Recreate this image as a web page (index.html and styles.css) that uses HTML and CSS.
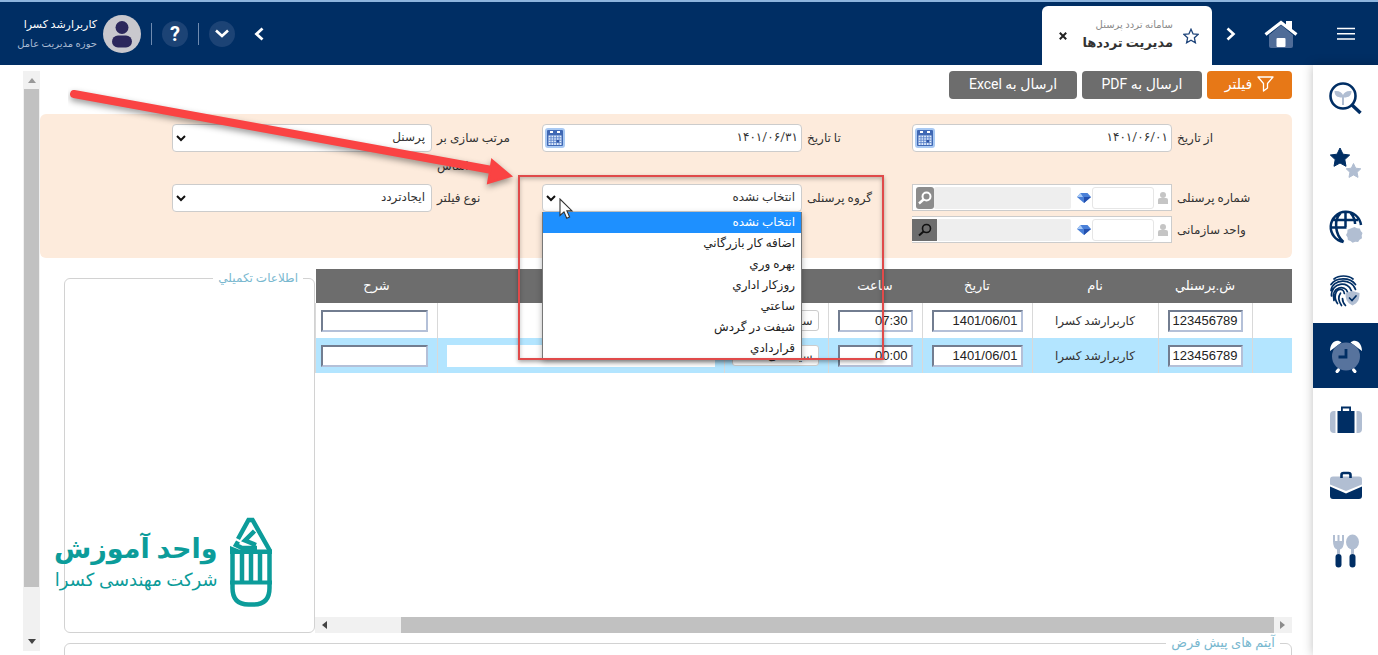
FILE: index.html
```html
<!DOCTYPE html>
<html lang="fa" dir="rtl">
<head>
<meta charset="utf-8">
<title>مدیریت ترددها</title>
<link rel="stylesheet" href="styles.css">
</head>
<body>
<header class="topbar">
  <button class="menu-btn" aria-label="منو"><svg width="18" height="14" viewBox="0 0 18 14"><path d="M0 1.5h18M0 6.8h18M0 12.1h18" stroke="#fff" stroke-width="1.5"/></svg></button>
  <a class="home" href="#" aria-label="خانه"><svg width="34" height="28" viewBox="0 0 34 28"><path d="M5 15 17 5l12 10v11a2 2 0 0 1-2 2H7a2 2 0 0 1-2-2z" fill="#4f6c98"/><path d="M22 1h6v10l-6-5z" fill="#fff"/><path d="M1.500 14.500 17 2.500l15.500 12" fill="none" stroke="#fff" stroke-width="3.200"/><rect x="12.500" y="18" width="9" height="9" rx="1" fill="#fff"/></svg></a>
  <button class="plain" aria-label="بعدی"><svg width="10" height="14" viewBox="0 0 10 14"><path d="m1.500 1.500 6 5.500-6 5.500" fill="none" stroke="#fff" stroke-width="2.600"/></svg></button>
  <div class="tab">
    <svg width="16" height="16" viewBox="0 0 16 16"><path d="m8 1.200 2.100 4.700 5 .5-3.700 3.400 1 5L8 12.200l-4.400 2.600 1-5L.9 6.400l5-.5z" fill="none" stroke="#1d4379" stroke-width="1.300"/></svg>
    <div class="tab-text"><span class="tab-sub">سامانه تردد پرسنل</span><strong>مدیریت ترددها</strong></div>
    <button class="close" aria-label="بستن"><svg width="8" height="8" viewBox="0 0 8 8"><path d="m.8.8 6.400 6.400M7.200.8.8 7.200" stroke="#222" stroke-width="2"/></svg></button>
  </div>
  <div class="spacer"></div>
  <button class="plain" aria-label="قبلی"><svg width="10" height="14" viewBox="0 0 10 14"><path d="m8.500 1.500-6 5.500 6 5.500" fill="none" stroke="#fff" stroke-width="2.800"/></svg></button>
  <button class="round first" aria-label="باز کردن"><svg width="14" height="9" viewBox="0 0 14 9"><path d="m1 1.500 6 5.500 6-5.500" fill="none" stroke="#fff" stroke-width="2.600"/></svg></button>
  <span class="divider"></span>
  <button class="round">?</button>
  <span class="divider"></span>
  <svg class="avatar" width="38" height="38" viewBox="0 0 38 38"><circle cx="19" cy="19" r="19" fill="#c9c8ce"/><circle cx="19" cy="12.500" r="6.500" fill="#2c275c"/><rect x="9" y="20.500" width="20" height="12" rx="6" fill="#2c275c"/></svg>
  <div class="user"><span>کاربرارشد کسرا</span><small>حوزه مدیریت عامل</small></div>
</header>

<div class="shell">
  <nav class="side">
    <a href="#" aria-label="جستجو"><svg width="34" height="34" viewBox="0 0 34 34"><path d="M13 23V15.500c-5 0-7.500-2-7.500-6.500 5-.5 7.500 1.500 8.500 4 1-2.500 3.500-4.500 8.500-4 0 4.500-2.500 6.500-7.500 6.500V23z" fill="#b1bed2"/><circle cx="14" cy="14" r="12.500" fill="none" stroke="#002e64" stroke-width="2.600"/><path d="m22.500 22.500 9 8.500" stroke="#002e64" stroke-width="3.400"/></svg></a>
    <a href="#" aria-label="علاقه‌مندی‌ها"><svg width="34" height="34" viewBox="0 0 34 34"><path d="m11 2 3 6.200 6.700.8-4.900 4.600 1.200 6.700-6-3.300-6 3.300 1.200-6.700L1.300 9l6.700-.8z" fill="#002e64" stroke="#002e64" stroke-linejoin="round"/><path d="m24.500 17.500 2.200 4.700 5.100.6-3.700 3.500.9 5.100-4.500-2.500-4.500 2.500.9-5.100-3.700-3.500 5.100-.6z" fill="#b1bed2" stroke="#b1bed2" stroke-linejoin="round"/></svg></a>
    <a href="#" aria-label="وب"><svg width="34" height="34" viewBox="0 0 34 34" fill="none" stroke="#002e64" stroke-width="2.500"><path d="M14.500 32A15.200 15.200 0 1 1 32 15M16.500 2v15M11.500 3C4.500 10 6 25 14.500 32M21.500 3c3 3.200 4.400 7.200 4.600 11M4 10h25M1.500 17.500h16"/><path d="m25.500 17 2.500 1.200 2.800.3 1 2.500 1.700 2-.8 2.500.3 2.800-2.400 1.400-1.500 2.300-2.800-.2-2.700.9-2.100-1.800-2.600-1-.4-2.700-1.500-2.300 1.300-2.400.2-2.700 2.500-1z" fill="#b1bed2" stroke="none"/></svg></a>
    <a href="#" aria-label="اثر انگشت"><svg width="34" height="34" viewBox="0 0 34 34" fill="none" stroke="#002e64" stroke-width="1.700" stroke-linecap="round"><path d="M5 5C10 1 19 1 24 5M2 10.500C7 3 21 3 26.500 10.500M2 16.500C3.500 4.500 23 4 26.500 15.500M2.500 22C2 7.500 20 7 22.500 17M5 26.500C2 11.500 16.500 11 18.500 18M8.500 29.500C4.500 24 6 15.500 11.500 15.500c2.500 0 3.500 1.500 3.800 4M12.500 31.500c-3-4.500-3.500-9-1-12.300M16.500 31.500c-2-2-3-4-3-7"/><path d="m23.500 17 7 2c0 6-1 9.500-7 12.500-6-3-7-6.500-7-12.500z" fill="#b1bed2" stroke="none"/><path d="m20.500 24 2.500 2.500 4-4.500"/></svg></a>
    <a class="active" href="#" aria-label="تردد"><svg width="34" height="34" viewBox="0 0 34 34"><path d="M1 12C1 3 8-1 12.500 3.500zM33 12c0-9-7-13-11.500-8.500z" fill="#fff"/><circle cx="17" cy="17.500" r="14" fill="#57739d"/><path d="M17 10v8h-7.500" fill="none" stroke="#002e64" stroke-width="2.800"/><path d="m9.300 31-1.200 1.500M24.700 31l1.200 1.500" stroke="#fff" stroke-width="3.200" stroke-linecap="round"/></svg></a>
    <a href="#" aria-label="ماموریت"><svg width="34" height="34" viewBox="0 0 34 34"><path d="M5 7h1.500v22H5a4 4 0 0 1-4-4V11a4 4 0 0 1 4-4zM27.500 7H29a4 4 0 0 1 4 4v14a4 4 0 0 1-4 4h-1.500z" fill="#b1bed2"/><path d="M8.500 7H12V2.500h10V7h3.500v22h-17zM13.800 7h6.400V4.500h-6.400z" fill="#002e64" fill-rule="evenodd"/></svg></a>
    <a href="#" aria-label="کیف"><svg width="34" height="34" viewBox="0 0 34 34"><path d="M4 7.500h26a3 3 0 0 1 3 3v5L17 22 1 15.500v-5a3 3 0 0 1 3-3z" fill="#b1bed2"/><path d="m1 17.500 16 7 16-7V27a3 3 0 0 1-3 3H4a3 3 0 0 1-3-3z" fill="#002e64"/><path d="M12.500 9V6q0-2 2-2h5q2 0 2 2v3" fill="none" stroke="#002e64" stroke-width="2.600"/></svg></a>
    <a href="#" aria-label="غذا"><svg width="34" height="34" viewBox="0 0 34 34"><path d="M5 1v7M9.500 1v8M14 1v7" stroke="#b1bed2" stroke-width="2"/><path d="M4 7h11q0 7-4 8.500V20H8v-4.500Q4 14 4 7z" fill="#b1bed2"/><ellipse cx="23.500" cy="8" rx="6.500" ry="7.500" fill="#b1bed2"/><path d="M22 14h3v6h-3z" fill="#b1bed2"/><rect x="6.500" y="20" width="6" height="13.500" rx="3" fill="#002e64"/><rect x="20.500" y="20" width="6" height="13.500" rx="3" fill="#002e64"/></svg></a>
  </nav>

  <main class="main">
    <div class="content">
      <div class="toolbar">
        <button class="btn orange"><svg width="17" height="16" viewBox="0 0 17 16"><path d="M1 1h15l-5.500 6.500V12L6.500 15V7.500z" fill="none" stroke="#fff" stroke-width="1.300" stroke-linejoin="round"/></svg>فیلتر</button>
        <button class="btn pdf">ارسال به PDF</button>
        <button class="btn excel">ارسال به Excel</button>
      </div>

      <form class="filters">
        <div class="field"><label for="from">از تاریخ</label>
          <div class="box"><input id="from" type="text" value="۱۴۰۱/۰۶/۰۱"><svg class="cal" width="20" height="20" viewBox="0 0 20 20"><use href="#calendar"/></svg></div></div>
        <div class="field"><label for="to">تا تاریخ</label>
          <div class="box"><input id="to" type="text" value="۱۴۰۱/۰۶/۳۱"><svg class="cal" width="20" height="20" viewBox="0 0 20 20"><g id="calendar"><rect width="20" height="20" rx="3" fill="#a9c9f3"/><rect x="2" y="2" width="16" height="16" rx="1" fill="#4068b4"/><path d="M5 3h3v2H5zM12 3h3v2h-3z" fill="#fff"/><path d="M3.500 7.500h13v9.500h-13z" fill="#e3eefc"/><path d="M3.500 9.800h13M3.500 12.200h13M3.500 14.600h13M6 7.500V17M8.700 7.500V17M11.400 7.500V17M14.100 7.500V17" stroke="#5b82c9" stroke-width=".9"/><path d="M11.500 12h2.500v2.500h-2.500z" fill="#2f55a5"/></g></svg></div></div>
        <div class="field"><label for="sort">مرتب سازی بر اساس</label>
          <div class="box"><select id="sort"><option>پرسنل</option></select><svg class="chev" width="10" height="7" viewBox="0 0 10 7"><path d="m1 1 4 4 4-4" fill="none" stroke="#111" stroke-width="2"/></svg></div></div>

        <div class="field"><label for="pno">شماره پرسنلی</label>
          <div class="lookup"><svg class="person" width="10" height="12" viewBox="0 0 10 12"><circle cx="5" cy="3" r="3" fill="#c5c5c5"/><path d="M0 12V8q0-2 2-2h6q2 0 2 2v4z" fill="#c5c5c5"/></svg><input class="code" id="pno" type="text"><svg class="gem" width="14" height="10" viewBox="0 0 14 10"><path d="M0 4 3.500 0h7L14 4l-7 6z" fill="#4a80d8"/><path d="M0 4 3.500 0 6 4z" fill="#a9caf6"/><path d="M7 10V4h7z" fill="#2450ae"/></svg><output class="name"></output><button type="button" class="find" aria-label="جستجوی پرسنل"><svg width="14" height="14" viewBox="0 0 14 14"><circle cx="8.500" cy="5.500" r="4" fill="none" stroke="#fff" stroke-width="2"/><path d="m5.500 8.500-4.500 4" stroke="#fff" stroke-width="2.400"/></svg></button></div></div>
        <div class="field"><label for="group">گروه پرسنلی</label>
          <div class="box open"><select id="group"><option>انتخاب نشده</option></select><svg class="chev" width="10" height="7" viewBox="0 0 10 7"><path d="m1 1 4 4 4-4" fill="none" stroke="#111" stroke-width="2"/></svg>
            <ul class="options" role="listbox" aria-label="گروه پرسنلی">
              <li role="option" aria-selected="true">انتخاب نشده</li>
              <li role="option">اضافه کار بازرگاني</li>
              <li role="option">بهره وري</li>
              <li role="option">روزکار اداري</li>
              <li role="option">ساعتي</li>
              <li role="option">شیفت در گردش</li>
              <li role="option">قراردادي</li>
            </ul>
            <span class="highlight"></span>
            <svg class="cursor" width="15" height="22" viewBox="0 0 15 22"><path d="M1 1v16.500l4-3.600 2.700 6.300 2.900-1.300-2.700-6H13z" fill="#fff" stroke="#333" stroke-width="1.100"/></svg>
          </div></div>
        <div class="field"><label for="ftype">نوع فیلتر</label>
          <div class="box"><select id="ftype"><option>ایجادتردد</option></select><svg class="chev" width="10" height="7" viewBox="0 0 10 7"><path d="m1 1 4 4 4-4" fill="none" stroke="#111" stroke-width="2"/></svg></div></div>

        <div class="field"><label for="unit">واحد سازمانی</label>
          <div class="lookup detached"><svg class="person" width="10" height="12" viewBox="0 0 10 12"><circle cx="5" cy="3" r="3" fill="#c5c5c5"/><path d="M0 12V8q0-2 2-2h6q2 0 2 2v4z" fill="#c5c5c5"/></svg><input class="code" id="unit" type="text"><svg class="gem" width="14" height="10" viewBox="0 0 14 10"><path d="M0 4 3.500 0h7L14 4l-7 6z" fill="#4a80d8"/><path d="M0 4 3.500 0 6 4z" fill="#a9caf6"/><path d="M7 10V4h7z" fill="#2450ae"/></svg><output class="name"></output><button type="button" class="find" aria-label="جستجوی واحد"><svg width="14" height="14" viewBox="0 0 14 14"><circle cx="8.500" cy="5.500" r="4" fill="none" stroke="#111" stroke-width="1.600"/><path d="m5.500 8.500-4.500 4" stroke="#111" stroke-width="2"/></svg></button></div></div>
      </form>

      <div class="work">
        <section class="grid-wrap">
          <table class="grid">
            <colgroup><col class="c-edge"><col class="c-no"><col class="c-name"><col class="c-date"><col class="c-time"><col class="c-type"><col><col class="c-desc"></colgroup>
            <thead><tr><th></th><th>ش.پرسنلي</th><th>نام</th><th>تاریخ</th><th>ساعت</th><th></th><th></th><th>شرح</th></tr></thead>
            <tbody>
              <tr><td></td><td><input class="cell" aria-label="ش.پرسنلي" value="123456789"></td><td>کاربرارشد کسرا</td><td><input class="cell" aria-label="تاریخ" value="1401/06/01"></td><td><input class="cell" aria-label="ساعت" value="07:30"></td><td><select class="pick" aria-label="نوع"><option>سیستمی</option></select></td><td><input class="flat" aria-label="توضیح"></td><td class="desc"><input class="cell" aria-label="شرح"></td></tr>
              <tr class="sel"><td></td><td><input class="cell" aria-label="ش.پرسنلي" value="123456789"></td><td>کاربرارشد کسرا</td><td><input class="cell" aria-label="تاریخ" value="1401/06/01"></td><td><input class="cell" aria-label="ساعت" value="00:00"></td><td><select class="pick" aria-label="نوع"><option>سیستمی</option></select></td><td><input class="flat" aria-label="توضیح"></td><td class="desc"><input class="cell" aria-label="شرح"></td></tr>
            </tbody>
          </table>
          <div class="hscroll"><svg width="6" height="8" viewBox="0 0 6 8"><path d="M0 0v8l5-4z" fill="#8c8c8c"/></svg><span class="hthumb"></span><svg width="6" height="8" viewBox="0 0 6 8"><path d="M6 0v8L1 4z" fill="#444"/></svg></div>
        </section>
        <fieldset class="panel extra"><legend>اطلاعات تکمیلي</legend>
          <div class="logo">
            <svg width="42" height="90" viewBox="0 0 42 90" fill="none" stroke="#0c9c9a" stroke-width="4.500"><path d="M2.500 32v39q0 16.500 16 16.500h5q16 0 16-16.500V33L22.500 3h-4L8 22"/><path d="m24.500 14-9.500 9.500 11 4.500M8 24.500 6 28l6 3h15"/><path d="M0 29v8h42v-4.500H9z" fill="#0c9c9a" stroke="none"/><path d="M0 65.500h42" stroke-width="4"/><path d="M12 36v29M21 36v29M30 36v29" stroke-width="4.500"/></svg>
            <div class="logo-text"><b>واحد آموزش</b><span>شرکت مهندسی کسرا</span></div>
          </div>
        </fieldset>
      </div>
      <fieldset class="panel defaults"><legend>آیتم های پیش فرض</legend></fieldset>
    </div>
    <div class="vscroll"><svg width="8" height="5" viewBox="0 0 8 5"><path d="M0 5h8L4 0z" fill="#999"/></svg><span class="vthumb"></span><svg class="end" width="8" height="5" viewBox="0 0 8 5"><path d="M0 0h8L4 5z" fill="#444"/></svg></div>
  </main>
</div>
<svg class="arrow" width="460" height="110" viewBox="0 0 460 110"><g><path d="M6 8 L424 84" stroke="#fa4343" stroke-width="8" stroke-linecap="round"/><path d="m424 74 19 16-23 7z" fill="#fa4343" stroke="#fa4343" stroke-width="2"/></g></svg>
</body>
</html>
```

FILE: styles.css
```css
* { box-sizing: border-box; }
body {
  margin: 0;
  height: 100vh;
  display: flex;
  flex-direction: column;
  overflow: hidden;
  position: relative;
  background: #fff;
  color: #333;
  font: 12px/20px Roboto, "DejaVu Sans", sans-serif;
}
button, input, select { font: inherit; color: inherit; margin: 0; padding: 0; border: 0; background: none; }
svg { display: block; flex: none; }

.topbar {
  height: 65px;
  flex: none;
  display: flex;
  align-items: center;
  background: #002e64;
  border-top: 2px solid #8db4dd;
  color: #fff;
}
.menu-btn { width: 65px; height: 63px; display: grid; place-items: center; }
.home { margin-right: 15px; }
.plain { width: 34px; height: 34px; display: grid; place-items: center; }
.home + .plain { margin-right: 16px; }
.tab {
  align-self: flex-end;
  height: 59px;
  width: 170px;
  margin-right: 2px;
  padding: 0 13px 0 17px;
  display: flex;
  align-items: center;
  gap: 10px;
  border-radius: 6px 6px 0 0;
  background: #fff;
}
.tab-text { flex: 1; display: flex; flex-direction: column; padding-bottom: 3px; white-space: nowrap; color: #333; }
.tab-text strong { font-size: 13px; line-height: 18px; }
.tab-sub { font-size: 10px; line-height: 18px; color: #8a8a8a; }
.close { width: 8px; padding: 4px 0; }
.spacer { flex: 1; }
.round {
  width: 26px; height: 26px;
  border-radius: 50%;
  display: grid;
  place-items: center;
  background: #1c4375;
  font-size: 20px;
  font-weight: 700;
}
.round.first { margin-right: 7px; }
.divider { width: 1px; height: 22px; margin: 0 10px; background: #6f8bb0; }
.user { width: 103px; padding-right: 6px; display: flex; flex-direction: column; white-space: nowrap; }
.user span { font-size: 11px; line-height: 19px; }
.user small { font-size: 10px; line-height: 19px; color: #a9bbd3; }

.shell { flex: 1; min-height: 0; display: flex; }
.side { width: 65px; flex: none; padding-top: 2px; background: #fff; box-shadow: 0 0 10px rgba(0, 0, 0, .25); }
.side a { height: 64px; display: grid; place-items: center; }
.side .active, .side .active ~ a { height: 65px; }
.side .active { background: #002e64; }

.main { flex: 1; min-width: 0; display: flex; padding: 6px 21px 0 22px; }
.content { flex: 1; min-width: 0; display: flex; flex-direction: column; }
.toolbar { display: flex; gap: 5px; height: 28px; }
.btn {
  display: flex;
  align-items: center;
  justify-content: center;
  gap: 5px;
  padding-bottom: 3px;
  border-radius: 4px;
  background: #6d6d6d;
  color: #fff;
  font-size: 14px;
}
.orange { width: 85px; background: #e77817; }
.pdf { width: 120px; }
.excel { width: 128px; }

.filters {
  margin-top: 15px;
  padding: 10px 41px 14px 132px;
  display: grid;
  grid-template-columns: repeat(3, 1fr);
  gap: 4px 31px;
  border-radius: 6px;
  background: #fdebdc;
}
.field { display: flex; gap: 5px; align-items: flex-start; min-width: 0; }
.field label { width: 74px; flex: none; line-height: 28px; text-align: left; }
.box { position: relative; flex: 1; height: 28px; }
.box input, .box select {
  width: 100%; height: 28px;
  padding: 0 6px 2px 6px;
  border: 1px solid #ccc;
  border-radius: 4px;
  background: #fff;
  appearance: none;
}
.box input { padding-right: 3px; direction: ltr; text-align: right; }
.box .cal { position: absolute; left: 3px; top: 4px; }
.chev { position: absolute; left: 4px; top: 11px; }
.lookup { flex: 1; height: 27px; display: flex; align-items: center; padding: 0 3px; border: 1px solid #ccc; background: #fff; }
.code { width: 62px; height: 22px; margin-right: 4px; border: 1px solid #e6e6e6; border-radius: 3px; background: #fff; }
.gem { margin: 0 1px 0 6px; }
.name { flex: 1; height: 22px; background: #eee; border-radius: 2px; }
.find { width: 18px; height: 22px; display: grid; place-items: center; border-radius: 3px; background: #8c8c8c; }
.detached { padding-left: 0; border-left: 0; }
.detached .find { width: 25px; border-radius: 0; background: #6d6d6d; }
.options {
  position: absolute;
  z-index: 3;
  top: 28px; left: 0; right: 0;
  margin: 0;
  padding: 0;
  list-style: none;
  border: 1px solid #777;
  border-top: 0;
  background: #fff;
  color: #222;
  box-shadow: 0 2px 6px rgba(0, 0, 0, .3);
}
.options li { height: 21px; line-height: 20px; padding: 0 6px; }
.options li[aria-selected] { background: #1e90ff; color: #fff; }
.highlight {
  position: absolute;
  z-index: 4;
  top: -9px; left: -24px; right: -82px;
  height: 185px;
  border: 2px solid #e04a4a;
  box-shadow: 0 2px 4px rgba(0, 0, 0, .35), inset 0 2px 4px rgba(0, 0, 0, .25);
}
.cursor { position: absolute; z-index: 5; left: 17px; top: 14px; }

.work { flex: 1; min-height: 0; margin-top: 11px; display: flex; }
.grid-wrap { flex: 1; min-width: 0; display: flex; flex-direction: column; justify-content: space-between; }
.grid { width: 100%; table-layout: fixed; border-collapse: collapse; }
.grid th { height: 34px; padding: 0; background: #6d6d6d; color: #fff; font-size: 13px; font-weight: 400; }
.grid td { height: 35px; padding: 0 9px; border-left: 1px solid #d9d9d9; text-align: center; }
.sel { background: #b3e5ff; }
.c-edge { width: 40px; } .c-no { width: 94px; } .c-name { width: 126px; } .c-date { width: 110px; }
.c-time { width: 94px; } .c-type { width: 104px; } .c-desc { width: 122px; }
.cell {
  display: block;
  width: 100%; height: 22px;
  padding: 0 3px;
  border: 2px solid;
  border-color: #727d90 #b4c0d8 #b4c0d8 #727d90;
  background: #fff;
  color: #222;
  direction: ltr;
  text-align: right;
  font: 13px "Liberation Sans", Arial, sans-serif;
}
.grid td.desc { padding: 0 9px 0 5px; }
.pick { display: block; width: 87px; height: 21px; padding: 0 5px; border: 1px solid #ccc; border-radius: 3px; background: #fff; appearance: none; }
.flat { display: block; width: 100%; height: 22px; background: #fff; }
.hscroll { height: 16px; display: flex; align-items: center; padding: 0 6px; background: #f1f1f1; }
.hthumb { flex: 1; height: 16px; margin: 0 6px 0 74px; background: #c1c1c1; }

.panel { margin: 0; padding: 0; min-width: 0; border: 1px solid #d2d2d2; border-radius: 6px; }
.panel legend { margin-right: 11px; padding: 0 5px; line-height: 18px; color: #79b8cf; }
.extra { width: 251px; flex: none; margin-left: 24px; }
.defaults { height: 40px; flex: none; margin: 1px 0 -19px 24px; }
.defaults legend { font-size: 13px; }
.logo { position: absolute; left: 54px; bottom: 48px; display: flex; gap: 12px; color: #0c9c9a; white-space: nowrap; }
.logo-text { display: flex; flex-direction: column; padding-top: 12px; }
.logo-text b { font-size: 27px; line-height: 40px; }
.logo-text span { font-size: 18px; line-height: 22px; }

.vscroll { width: 17px; margin: 0 0 4px 1px; padding: 7px 0; display: flex; flex-direction: column; align-items: center; background: #f1f1f1; }
.vthumb { width: 15px; height: 88%; margin-top: 6px; background: #c1c1c1; }
.vscroll .end { margin: auto 0 0; }
.arrow { position: absolute; z-index: 6; left: 68px; top: 86px; pointer-events: none; }
.arrow g { filter: drop-shadow(0 3px 3px rgba(0, 0, 0, .4)); }
```
